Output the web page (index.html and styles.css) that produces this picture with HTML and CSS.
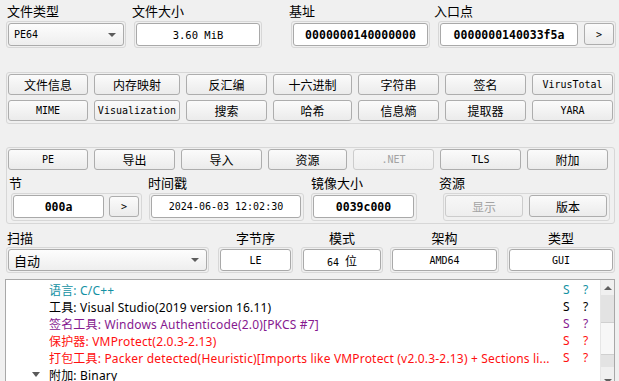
FILE: index.html
```html
<!DOCTYPE html>
<html lang="zh">
<head>
  <meta charset="UTF-8">
  <title>Detect It Easy</title>
  <link rel="stylesheet" href="styles.css">
</head>
<body>

  <!-- FILE INFO ROW -->
  <div class="top-row">
    <div class="col col-type">
      <div class="lbl">文件类型</div>
      <div class="frame">
        <div class="combo mono">PE64<span class="arrow"></span></div>
      </div>
    </div>
    <div class="col col-size">
      <div class="lbl shift2">文件大小</div>
      <div class="frame">
        <div class="field mono size">3.60 MiB</div>
      </div>
    </div>
    <div class="col col-base">
      <div class="lbl shift2">基址</div>
      <div class="frame">
        <div class="field hex">0000000140000000</div>
      </div>
    </div>
    <div class="col col-entry">
      <div class="lbl shift4">入口点</div>
      <div class="frame">
        <div class="field hex">0000000140033f5a</div>
        <button class="btn small mono">&gt;</button>
      </div>
    </div>
  </div>

  <!-- TOOLS -->
  <div class="group tools">
    <button class="btn">文件信息</button>
    <button class="btn">内存映射</button>
    <button class="btn">反汇编</button>
    <button class="btn">十六进制</button>
    <button class="btn">字符串</button>
    <button class="btn">签名</button>
    <button class="btn mono">VirusTotal</button>
    <button class="btn mono">MIME</button>
    <button class="btn mono">Visualization</button>
    <button class="btn">搜索</button>
    <button class="btn">哈希</button>
    <button class="btn">信息熵</button>
    <button class="btn">提取器</button>
    <button class="btn mono">YARA</button>
  </div>

  <!-- PE SECTION -->
  <div class="group pe">
    <div class="pe-buttons">
      <button class="btn mono">PE</button>
      <button class="btn">导出</button>
      <button class="btn">导入</button>
      <button class="btn">资源</button>
      <button class="btn mono" disabled>.NET</button>
      <button class="btn mono">TLS</button>
      <button class="btn">附加</button>
    </div>
    <div class="pe-info">
      <div class="col col-sect">
        <div class="lbl shift2">节</div>
        <div class="frame tall">
          <div class="field hex">000a</div>
          <button class="btn small mono">&gt;</button>
        </div>
      </div>
      <div class="col col-time">
        <div class="lbl shift1">时间戳</div>
        <div class="frame tall">
          <div class="field mono">2024-06-03 12:02:30</div>
        </div>
      </div>
      <div class="col col-image">
        <div class="lbl">镜像大小</div>
        <div class="frame tall">
          <div class="field hex">0039c000</div>
        </div>
      </div>
      <div class="col col-res">
        <div class="lbl shift4">资源</div>
        <div class="frame tall res">
          <button class="btn" disabled>显示</button>
          <button class="btn">版本</button>
        </div>
      </div>
    </div>
  </div>

  <!-- SCAN ROW -->
  <div class="scan-row">
    <div class="col col-scan">
      <div class="lbl">扫描</div>
      <div class="frame short">
        <div class="combo cjk">自动<span class="arrow"></span></div>
      </div>
    </div>
    <div class="col col-endian">
      <div class="lbl center">字节序</div>
      <div class="frame short"><div class="field mono">LE</div></div>
    </div>
    <div class="col col-mode">
      <div class="lbl center">模式</div>
      <div class="frame short"><div class="field mono"><span>64&nbsp;<span class="cjk-in">位</span></span></div></div>
    </div>
    <div class="col col-arch">
      <div class="lbl center">架构</div>
      <div class="frame short"><div class="field mono">AMD64</div></div>
    </div>
    <div class="col col-kind">
      <div class="lbl center">类型</div>
      <div class="frame short"><div class="field mono">GUI</div></div>
    </div>
  </div>

  <!-- RESULTS -->
  <div class="results">
    <div class="lines">
      <div class="line lang"><span class="txt">语言: C/C++</span><span class="s">S</span><span class="q">?</span></div>
      <div class="line tool"><span class="txt">工具: Visual Studio(2019 version 16.11)</span><span class="s">S</span><span class="q">?</span></div>
      <div class="line sign"><span class="txt">签名工具: Windows Authenticode(2.0)[PKCS #7]</span><span class="s">S</span><span class="q">?</span></div>
      <div class="line prot"><span class="txt">保护器: VMProtect(2.0.3-2.13)</span><span class="s">S</span><span class="q">?</span></div>
      <div class="line prot"><span class="txt">打包工具: Packer detected(Heuristic)[Imports like VMProtect (v2.0.3-2.13) + Sections li...</span><span class="s">S</span><span class="q">?</span></div>
      <div class="line tool"><span class="tree-arrow"></span><span class="txt">附加: Binary</span></div>
    </div>
    <div class="scrollbar">
      <div class="sb-btn"><span class="up"></span></div>
      <div class="sb-track">
        <div class="sb-gap"></div>
        <div class="sb-thumb"></div>
        <div class="sb-gap small"></div>
      </div>
      <div class="sb-btn"><span class="down"></span></div>
    </div>
  </div>

</body>
</html>
```

FILE: styles.css
```css
* {
  box-sizing: border-box;
}

body {
  background: #f0f0f0;
  font-family: "Noto Sans CJK SC", sans-serif;
  font-size: 13px;
  color: #000;
  margin: 0;
  padding: 3px 0 0 0;
  width: 619px;
  height: 381px;
  overflow: hidden;
}

.mono {
  font-family: "DejaVu Sans Mono", "Noto Sans CJK SC", monospace;
  font-size: 10px;
}

.cjk-in {
  font-family: "Noto Sans CJK SC", sans-serif;
  font-size: 12px;
}

.lbl {
  height: 16px;
  line-height: 16px;
  white-space: nowrap;
}

.shift1 { margin-left: -1px; }
.shift2 { margin-left: -2px; }
.shift4 { margin-left: -4px; }

.center {
  text-align: center;
}

/* frame round every control */
.frame {
  display: flex;
  gap: 6px;
  height: 27px;
  margin-top: 2px;
  padding: 1px;
  border: 1px solid #d7d7d7;
  border-radius: 3px;
}

.frame.tall {
  height: 28px;
  margin-top: 0;
  padding: 1px 2px 2px 1px;
}

.frame.short {
  height: 26px;
  margin-top: 1px;
}

.field {
  flex: 1;
  display: flex;
  align-items: center;
  justify-content: center;
  background: #fff;
  border: 1px solid #a9a9a9;
  border-radius: 3px;
  white-space: nowrap;
}

.field.size {
  font-size: 10.5px;
}

.hex {
  font-family: "DejaVu Sans Mono", monospace;
  font-weight: bold;
  font-size: 11.5px;
}

.combo {
  flex: 1;
  display: flex;
  align-items: center;
  justify-content: space-between;
  padding: 0 7px 0 5px;
  background: linear-gradient(#fdfdfd, #eeeeee);
  border: 1px solid #ababab;
  border-radius: 3px;
}

.combo.cjk {
  font-size: 13px;
  padding-left: 5px;
}

.arrow {
  width: 0;
  height: 0;
  border-left: 4px solid transparent;
  border-right: 4px solid transparent;
  border-top: 4px solid #5c5c5c;
}

.btn {
  height: 21px;
  padding: 0;
  background: linear-gradient(#fbfbfb, #ebebeb);
  border: 1px solid #adadad;
  border-radius: 3px;
  font-family: "Noto Sans CJK SC", sans-serif;
  font-size: 12px;
  color: #000;
  white-space: nowrap;
}

.btn.mono {
  font-family: "DejaVu Sans Mono", "Noto Sans CJK SC", monospace;
  font-size: 10px;
}

.btn:disabled {
  color: #a3a3a3;
  border-color: #cccccc;
  background: linear-gradient(#f7f7f7, #eeeeee);
}

.btn.small {
  width: 30px;
  height: 22px;
}

/* top row */
.top-row {
  display: flex;
  padding-left: 6px;
}

.col-type { width: 119px; margin-left: 1px; }
.col-type .frame { margin-left: -1px; }
.col-size { width: 128px; margin-left: 8px; }
.col-base { width: 139px; margin-left: 29px; }
.col-entry { width: 178px; margin-left: 8px; }

/* button groups */
.group {
  margin-left: 6px;
  width: 609px;
  border: 1px solid #d7d7d7;
  border-radius: 3px;
  padding: 1px 1px 2px 1px;
}

.tools {
  margin-top: 24px;
  height: 52px;
  display: grid;
  grid-template-columns: 80px 86px 81px 79px 81px 81px 81px;
  gap: 5px 6px;
}

.pe {
  margin-top: 23px;
  height: 77px;
}

.pe-buttons {
  display: grid;
  grid-template-columns: 80px 81px 81px 79px 81px 81px 81px;
  column-gap: 6px;
}

.pe-info {
  display: flex;
  margin-top: 5px;
}

.pe-info .lbl {
  margin-bottom: 2px;
}

.col-sect { width: 131px; margin-left: 3px; }
.col-time { width: 155px; margin-left: 7px; }
.col-image { width: 106px; margin-left: 7px; }
.col-res { width: 167px; margin-left: 26px; }

.col-sect .frame { gap: 5px; }
.col-sect .btn.small { height: 21px; margin-top: 1px; }

.res .btn {
  flex: 1;
  height: 22px;
}

/* scan row */
.scan-row {
  display: flex;
  margin-top: 6px;
  padding-left: 6px;
}

.col-scan { width: 203px; }
.col-scan .lbl { margin-left: 1px; }
.col-endian { width: 75px; margin-left: 9px; }
.col-mode { width: 82px; margin-left: 8px; }
.col-arch { width: 109px; margin-left: 7px; }
.col-kind { width: 108px; margin-left: 8px; }

/* results list */
.results {
  display: flex;
  margin: 6px 0 0 5px;
  width: 610px;
  height: 110px;
  background: #fff;
  border: 1px solid #a8a8a8;
}

.lines {
  flex: 1;
  padding-top: 1px;
  font-family: "Noto Sans", "Noto Sans CJK SC", sans-serif;
  font-size: 12px;
}

.line {
  display: flex;
  align-items: center;
  height: 17px;
  padding-left: 43px;
  white-space: nowrap;
}

.line .txt {
  width: 507px;
  overflow: hidden;
  letter-spacing: 0.18px;
}

.line .s {
  width: 20px;
  margin-left: 7px;
}

.lang { color: #1391a3; }
.tool { color: #000; }
.sign { color: #86198f; }
.prot { color: #ff1010; }

.tree-arrow {
  width: 0;
  height: 0;
  margin-left: -17px;
  margin-right: 9px;
  border-left: 4px solid transparent;
  border-right: 4px solid transparent;
  border-top: 5px solid #5a5a5a;
}

.scrollbar {
  width: 14px;
  display: flex;
  flex-direction: column;
  background: #f0f0f0;
  border-left: 1px solid #e6e6e6;
}

.sb-btn {
  height: 15px;
  display: flex;
  align-items: center;
  justify-content: center;
}

.sb-track {
  flex: 1;
  display: flex;
  flex-direction: column;
}

.sb-gap {
  height: 27px;
  background: #e3e3e3;
}

.sb-gap.small {
  height: 12px;
}

.sb-thumb {
  height: 33px;
  background: #f7f7f7;
  border-top: 1px solid #d0d0d0;
  border-bottom: 1px solid #d0d0d0;
}

.up, .down {
  width: 0;
  height: 0;
  border-left: 4px solid transparent;
  border-right: 4px solid transparent;
}

.up { border-bottom: 4px solid #606060; }
.down { border-top: 4px solid #606060; }
```
